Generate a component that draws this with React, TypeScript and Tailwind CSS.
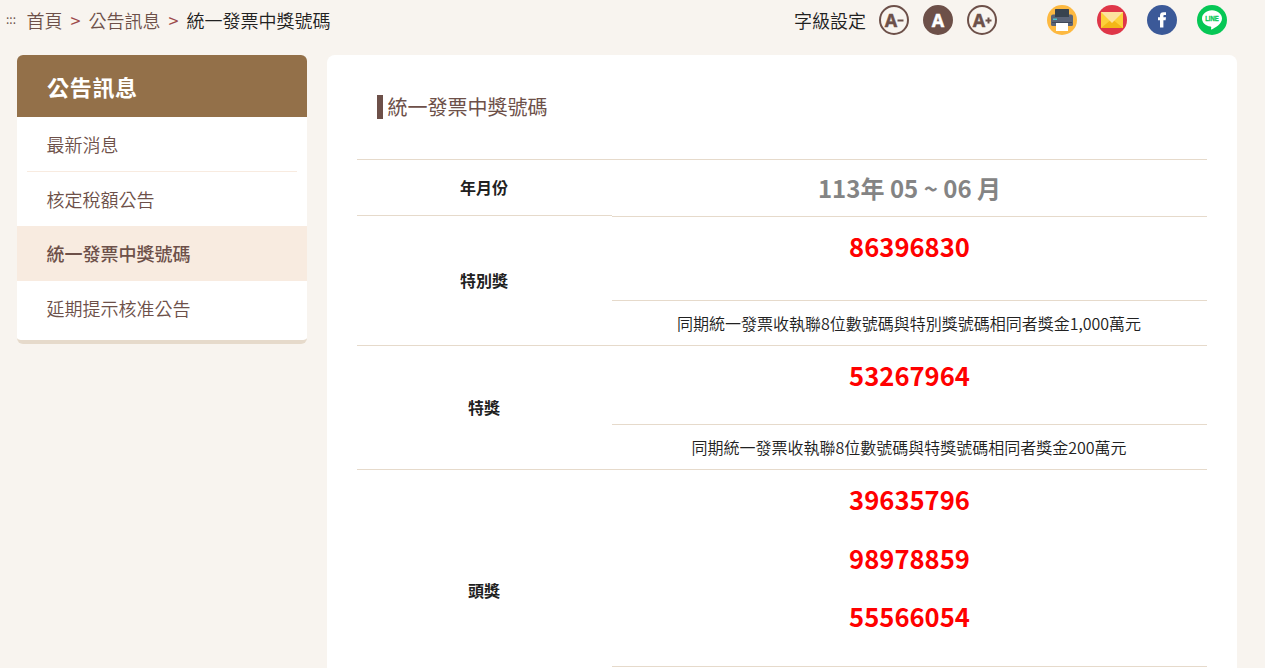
import React from "react";

const menu = ["最新消息", "核定稅額公告", "統一發票中獎號碼", "延期提示核准公告"];

function PrintIcon() {
  return (
    <svg width="30" height="30" viewBox="0 0 30 30">
      <circle cx="15" cy="15" r="15" fill="#fdb941" />
      <rect x="8" y="4" width="14" height="9" rx="0.5" fill="#38434f" />
      <path d="M6 9.500h2v2.500h14V9.500h2a2 2 0 0 1 2 2V19.500a1.500 1.500 0 0 1-1.500 1.500H5.500A1.500 1.500 0 0 1 4 19.500V11.500a2 2 0 0 1 2-2z" fill="#5b6477" />
      <rect x="5" y="17" width="20" height="1" fill="#3f4757" />
      <rect x="6" y="13.500" width="4" height="1.500" fill="#4fc3c8" />
      <rect x="9" y="18" width="12" height="8" fill="#fff" />
    </svg>
  );
}

function MailIcon() {
  return (
    <svg width="30" height="30" viewBox="0 0 30 30">
      <circle cx="15" cy="15" r="15" fill="#df3648" />
      <rect x="4" y="7" width="22" height="16" fill="#fdd13b" />
      <path d="M4 23L15 14l11 9z" fill="#f3b718" />
      <path d="M4 7h22L15 18z" fill="#fde29f" />
    </svg>
  );
}

function FacebookIcon() {
  return (
    <svg width="30" height="30" viewBox="0 0 30 30">
      <circle cx="15" cy="15" r="15" fill="#3b5998" />
      <path d="M13 22.500v-7.300H11v-2.900h2v-1.700c0-2.300 1.200-3.400 3.500-3.400h2.500v2.900h-1.500c-.8 0-1.100.4-1.100 1.100v1.100h2.600l-.4 2.900h-2.200v7.300z" fill="#fff" />
    </svg>
  );
}

function LineIcon() {
  return (
    <svg width="30" height="30" viewBox="0 0 30 30">
      <circle cx="15" cy="15" r="15" fill="#06c755" />
      <path d="M15 5.200c-5.500 0-10 3.700-10 8.200 0 4 3.500 7.400 8.400 8 .9.200.9.700.8 1.400l-.2 1.200c0 .4.200.6.700.4C18 22.700 25 18.800 25 13.400c0-4.500-4.500-8.200-10-8.200z" fill="#fff" />
      <text x="15" y="16" textAnchor="middle" textLength="13.500" lengthAdjust="spacingAndGlyphs" fontSize="6.500" fontWeight="700" fill="#06c755" stroke="#06c755" strokeWidth="0.3" fontFamily="Liberation Sans, sans-serif">LINE</text>
    </svg>
  );
}

function SizeIcon({ label, active }: { label: "-" | "" | "+"; active?: boolean }) {
  const ink = active ? "#fff" : "#6d5049";
  return (
    <svg width="30" height="30" viewBox="0 0 30 30">
      <circle cx="15" cy="15" r="14" fill={active ? "#6d5049" : "none"} stroke="#6d5049" strokeWidth="2" />
      <text x={active ? 15 : 12} y="21.500" textAnchor="middle" fontSize="18" fontWeight="700" fill={ink} stroke={ink} strokeWidth="0.4" fontFamily="Noto Sans, sans-serif">A</text>
      {label !== "" && <path d={label === "+" ? "M18.500 15.500h6M21.500 12.500v6" : "M18.500 15.500h6"} stroke={ink} strokeWidth="2" />}
    </svg>
  );
}

function Numbers({ values }: { values: string[] }) {
  return (
    <div className="text-[25.6px] font-bold leading-[39px] text-[#ff0000]">
      {values.map((v) => (
        <p key={v} className="mb-[19.500px]">{v}</p>
      ))}
    </div>
  );
}

function Prize({ name, values, note, h1, h2 }: { name: string; values: string[]; note?: string; h1: string; h2?: string }) {
  return (
    <section className="flex shrink-0 border-b border-[#e6dacb]">
      <h2 className="flex w-[255px] items-center justify-center pb-0.5 pr-px text-base font-bold text-[#212121]">{name}</h2>
      <div className="flex-1 text-center">
        <div className={`border-b border-[#e6dacb] pt-[9px] ${h1}`}><Numbers values={values} /></div>
        <div className={`flex items-center justify-center pr-px text-base font-[350] text-[#212121] ${h2 ?? ""}`}>{note}</div>
      </div>
    </section>
  );
}

export default function App() {
  return (
    <div className="h-[668px] w-[1265px] overflow-hidden bg-[#f8f4ef] font-['Noto_Sans_CJK_TC',sans-serif]">
      <header className="flex h-[55px] items-start justify-between pl-[6px] pr-[38px]">
        <nav className="flex h-[39px] items-center text-lg font-[350] text-[#6d5049]">
          <span className="w-[20.500px] text-[12px] font-normal">:::</span>
          <a>首頁</a>
          <span className="w-[26px] text-center font-normal text-[#9d4a4a]">&gt;</span>
          <a>公告訊息</a>
          <span className="w-[26px] text-center font-normal text-[#9d4a4a]">&gt;</span>
          <span className="text-[#212121]">統一發票中獎號碼</span>
        </nav>
        <div className="flex h-10 items-center">
          <span className="mr-[13px] text-lg font-[350] text-[#212121]">字級設定</span>
          <div className="mr-[50px] flex gap-[14px]">
            <SizeIcon label="-" />
            <SizeIcon label="" active />
            <SizeIcon label="+" />
          </div>
          <div className="flex gap-5">
            <PrintIcon />
            <MailIcon />
            <FacebookIcon />
            <LineIcon />
          </div>
        </div>
      </header>
      <div className="flex items-start gap-5 pl-[17px]">
        <aside className="h-[289px] w-[290px] overflow-hidden rounded-md border-b-4 border-[#e6dacb] bg-white">
          <h2 className="flex h-[62px] items-center bg-[#937049] pl-[30px] pt-px text-[22px] font-bold tracking-[0.7px] text-white">公告訊息</h2>
          <ul className="text-lg font-[350] text-[#6d5049]">
            {menu.map((m, i) => (
              <li key={m} className={i === 2 ? "bg-[#f8ebe0] font-medium" : "px-[10px]"}>
                <a className={`flex items-center ${i === 2 ? "h-[55px] pb-0.5 pl-[29.500px]" : i === 0 ? "h-[55px] border-b border-[#f8ebe0] pl-[19.500px]" : i === 1 ? "h-[54px] pl-[19.500px]" : "h-[55px] pb-0.5 pl-[19.500px]"}`}>{m}</a>
              </li>
            ))}
          </ul>
        </aside>
        <main className="h-[700px] w-[910px] rounded-lg bg-white px-[30px] pt-10">
          <div className="ml-5 flex h-6 items-center border-l-[6px] border-[#6d5049] pl-[4.500px]">
            <h1 className="text-xl text-[#6d5049]">統一發票中獎號碼</h1>
          </div>
          <div className="mt-10 border-t border-[#e6dacb]">
            <div className="flex items-start">
              <h2 className="flex h-14 w-[255px] items-center justify-center border-b border-[#e6dacb] pb-0.5 pr-px text-base font-bold text-[#212121]">年月份</h2>
              <div className="flex h-[57px] flex-1 items-center justify-center border-b border-[#e6dacb] text-2xl font-bold text-[#848484]">113年 05 ~ 06 月</div>
            </div>
            <Prize name="特別獎" values={["86396830"]} note="同期統一發票收執聯8位數號碼與特別獎號碼相同者獎金1,000萬元" h1="h-[84px]" h2="h-[44px]" />
            <Prize name="特獎" values={["53267964"]} note="同期統一發票收執聯8位數號碼與特獎號碼相同者獎金200萬元" h1="h-[79px]" h2="h-[44px]" />
            <Prize name="頭獎" values={["39635796", "98978859", "55566054"]} h1="h-[197px]" h2="h-[44px]" />
          </div>
        </main>
      </div>
    </div>
  );
}
